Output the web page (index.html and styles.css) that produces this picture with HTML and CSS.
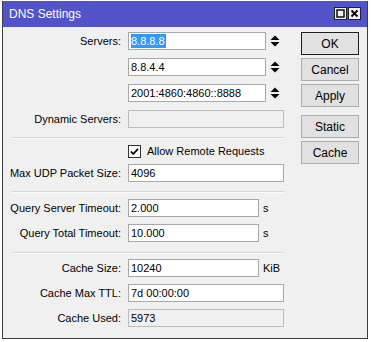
FILE: index.html
```html
<!DOCTYPE html>
<html lang="en">
<head>
    <meta charset="UTF-8">
    <title>DNS Settings</title>
    <link rel="stylesheet" href="styles.css">
</head>
<body>
    <div class="window">
        <div class="titlebar">
            <span class="title">DNS Settings</span>
            <div class="title-btns">
                <span class="tbtn">
                    <svg viewBox="0 0 11 11" width="11" height="11"><rect x="2" y="2" width="7" height="7" fill="none" stroke="#000" stroke-width="1.4"/></svg>
                </span>
                <span class="tbtn">
                    <svg viewBox="0 0 11 11" width="11" height="11"><path d="M2.5 2.5l6 6M8.5 2.5l-6 6" stroke="#000" stroke-width="1.8"/></svg>
                </span>
            </div>
        </div>
        <div class="content">
            <div class="form">
                <div class="group servers">
                    <div class="row">
                        <span class="label">Servers:</span>
                        <div class="field">
                            <div class="input w-srv"><span class="selected">8.8.8.8</span></div>
                            <svg class="spin" viewBox="0 0 10 12" width="10" height="12"><path d="M0.5 5L5 0.5 9.5 5z M0.5 7h9L5 11.5z" fill="#000"/></svg>
                        </div>
                    </div>
                    <div class="row">
                        <span class="label"></span>
                        <div class="field">
                            <div class="input w-srv">8.8.4.4</div>
                            <svg class="spin" viewBox="0 0 10 12" width="10" height="12"><path d="M0.5 5L5 0.5 9.5 5z M0.5 7h9L5 11.5z" fill="#000"/></svg>
                        </div>
                    </div>
                    <div class="row">
                        <span class="label"></span>
                        <div class="field">
                            <div class="input w-srv">2001:4860:4860::8888</div>
                            <svg class="spin" viewBox="0 0 10 12" width="10" height="12"><path d="M0.5 5L5 0.5 9.5 5z M0.5 7h9L5 11.5z" fill="#000"/></svg>
                        </div>
                    </div>
                    <div class="row">
                        <span class="label">Dynamic Servers:</span>
                        <div class="field"><div class="input w-full disabled"></div></div>
                    </div>
                </div>

                <div class="sep sep-1"></div>

                <div class="row check-row">
                    <span class="label"></span>
                    <div class="field">
                        <span class="checkbox">
                            <svg viewBox="0 0 11 11" width="11" height="11"><path d="M2 5.5l2.3 2.5L9 2.8" fill="none" stroke="#000" stroke-width="1.8"/></svg>
                        </span>
                        <span class="check-text">Allow Remote Requests</span>
                    </div>
                </div>

                <div class="row udp-row">
                    <span class="label">Max UDP Packet Size:</span>
                    <div class="field"><div class="input w-full">4096</div></div>
                </div>

                <div class="sep sep-2"></div>

                <div class="group timeouts">
                    <div class="row">
                        <span class="label">Query Server Timeout:</span>
                        <div class="field"><div class="input w-short">2.000</div><span class="unit">s</span></div>
                    </div>
                    <div class="row">
                        <span class="label">Query Total Timeout:</span>
                        <div class="field"><div class="input w-short">10.000</div><span class="unit">s</span></div>
                    </div>
                </div>

                <div class="sep sep-3"></div>

                <div class="group cache">
                    <div class="row">
                        <span class="label">Cache Size:</span>
                        <div class="field"><div class="input w-short">10240</div><span class="unit">KiB</span></div>
                    </div>
                    <div class="row">
                        <span class="label">Cache Max TTL:</span>
                        <div class="field"><div class="input w-full">7d 00:00:00</div></div>
                    </div>
                    <div class="row">
                        <span class="label">Cache Used:</span>
                        <div class="field"><div class="input w-full disabled">5973</div></div>
                    </div>
                </div>
            </div>

            <div class="buttons">
                <div class="btn default">OK</div>
                <div class="btn">Cancel</div>
                <div class="btn">Apply</div>
                <div class="btn spaced">Static</div>
                <div class="btn">Cache</div>
            </div>
        </div>
    </div>
</body>
</html>
```

FILE: styles.css
```css
body {
    margin: 0;
    background: #fff;
    font-family: "Liberation Sans", Arial, sans-serif;
    font-size: 11px;
    color: #000;
}
.window {
    margin: 1px 0 0 2px;
    width: 366px;
    height: 338px;
    box-sizing: border-box;
    border: 1px solid #3c3c3c;
    border-top: none;
    background: #f0f0f0;
}
.titlebar {
    height: 26px;
    background: #5252c9;
    display: flex;
    align-items: center;
    justify-content: space-between;
    padding: 0 6px 0 6px;
    color: #fff;
    font-size: 12px;
}
.title-btns {
    display: flex;
    gap: 1px;
    margin-top: -2px;
}
.tbtn {
    width: 13px;
    height: 13px;
    box-sizing: border-box;
    border: 1px solid #222;
    background: #f0f0f0;
    display: flex;
    align-items: center;
    justify-content: center;
}
.content {
    display: flex;
    justify-content: space-between;
    padding: 5px 8px 0 0;
}
.form {
    display: flex;
    flex-direction: column;
}
.group {
    display: flex;
    flex-direction: column;
    gap: 7px;
}
.servers {
    gap: 8px;
}
.row {
    display: grid;
    grid-template-columns: 118px auto;
    column-gap: 7px;
    align-items: center;
    height: 18px;
}
.label {
    text-align: right;
    white-space: nowrap;
}
.field {
    display: flex;
    align-items: center;
}
.input {
    height: 18px;
    box-sizing: border-box;
    border: 1px solid #a8a8a8;
    background: #fff;
    padding: 0 2px;
    line-height: 16px;
    white-space: nowrap;
    overflow: hidden;
}
.input.disabled {
    background: #f0f0f0;
    border-color: #bcbcbc;
}
.w-srv {
    width: 138px;
}
.w-full {
    width: 156px;
}
.w-short {
    width: 131px;
}
.selected {
    background: #3399ff;
    color: #fff;
    padding: 1px 1px 1px 0;
}
.spin {
    margin-left: 4px;
}
.unit {
    margin-left: 4px;
}
.sep {
    margin-left: 9px;
    width: 272px;
    height: 0;
    border-top: 1px solid #d6d6d6;
    border-bottom: 1px solid #fcfcfc;
}
.sep-1 {
    margin-top: 9px;
}
.check-row {
    margin-top: 4px;
    height: 16px;
}
.checkbox {
    width: 13px;
    height: 13px;
    box-sizing: border-box;
    border: 1px solid #333;
    background: #fff;
    display: flex;
    align-items: center;
    justify-content: center;
}
.check-text {
    margin-left: 6px;
}
.udp-row {
    margin-top: 5px;
}
.sep-2 {
    margin-top: 9px;
}
.timeouts {
    margin-top: 6px;
}
.sep-3 {
    margin-top: 10px;
}
.cache {
    margin-top: 5px;
}
.buttons {
    display: flex;
    flex-direction: column;
    gap: 3px;
    width: 58px;
}
.btn {
    height: 23px;
    box-sizing: border-box;
    border: 1px solid #adadad;
    background: #e1e1e1;
    display: flex;
    align-items: center;
    justify-content: center;
    font-size: 12px;
}
.btn.default {
    border-color: #1e1e1e;
}
.btn.spaced {
    margin-top: 5px;
}
```
